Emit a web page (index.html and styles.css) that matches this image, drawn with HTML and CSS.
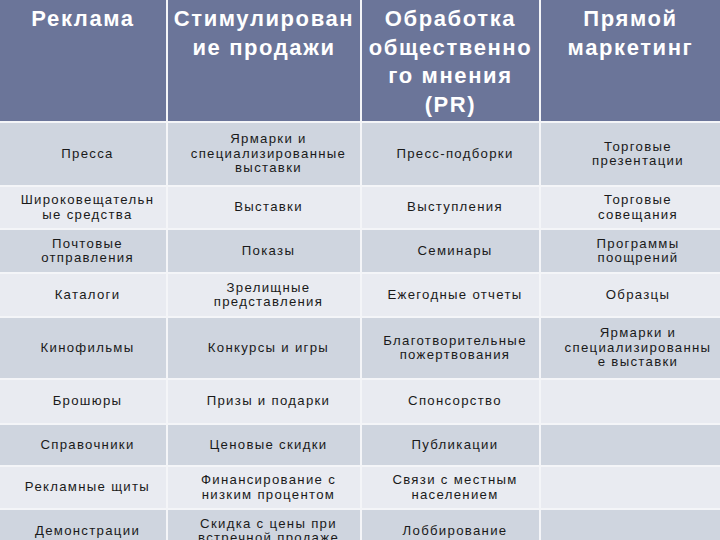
FILE: index.html
```html
<!DOCTYPE html>
<html lang="ru">
<head>
<meta charset="utf-8">
<link rel="stylesheet" href="styles.css">
</head>
<body>
<div class="table">
  <div class="cell head">Реклама</div>
  <div class="cell head">Стимулирован<br>ие продажи</div>
  <div class="cell head">Обработка<br>общественно<br>го мнения<br>(PR)</div>
  <div class="cell head">Прямой<br>маркетинг</div>

  <div class="cell dark">Пресса</div>
  <div class="cell dark">Ярмарки и<br>специализированные<br>выставки</div>
  <div class="cell dark">Пресс-подборки</div>
  <div class="cell dark last">Торговые<br>презентации</div>

  <div class="cell light">Широковещательн<br>ые средства</div>
  <div class="cell light">Выставки</div>
  <div class="cell light">Выступления</div>
  <div class="cell light last">Торговые<br>совещания</div>

  <div class="cell dark">Почтовые<br>отправления</div>
  <div class="cell dark">Показы</div>
  <div class="cell dark">Семинары</div>
  <div class="cell dark last">Программы<br>поощрений</div>

  <div class="cell light">Каталоги</div>
  <div class="cell light">Зрелищные<br>представления</div>
  <div class="cell light">Ежегодные отчеты</div>
  <div class="cell light last">Образцы</div>

  <div class="cell dark">Кинофильмы</div>
  <div class="cell dark">Конкурсы и игры</div>
  <div class="cell dark">Благотворительные<br>пожертвования</div>
  <div class="cell dark last">Ярмарки и<br>специализированны<br>е выставки</div>

  <div class="cell light">Брошюры</div>
  <div class="cell light">Призы и подарки</div>
  <div class="cell light">Спонсорство</div>
  <div class="cell light last"></div>

  <div class="cell dark">Справочники</div>
  <div class="cell dark">Ценовые скидки</div>
  <div class="cell dark">Публикации</div>
  <div class="cell dark last"></div>

  <div class="cell light">Рекламные щиты</div>
  <div class="cell light">Финансирование с<br>низким процентом</div>
  <div class="cell light">Связи с местным<br>населением</div>
  <div class="cell light last"></div>

  <div class="cell dark">Демонстрации</div>
  <div class="cell dark">Скидка с цены при<br>встречной продаже</div>
  <div class="cell dark">Лоббирование</div>
  <div class="cell dark last"></div>
</div>
</body>
</html>
```

FILE: styles.css
```css
html, body {
  margin: 0;
  padding: 0;
  background: #ffffff;
  overflow: hidden;
}

.table {
  display: grid;
  grid-template-columns: 166px 192px 177px 179px;
  grid-template-rows: 121px 62px 41px 42px 42px 60px 43px 40px 41px 42px;
  column-gap: 2px;
  row-gap: 2px;
  width: 720px;
  background: #f4f5f8;
}

.cell {
  display: flex;
  align-items: center;
  justify-content: center;
  text-align: center;
  font-family: "Liberation Sans", Arial, sans-serif;
  font-size: 13.2px;
  line-height: 14.5px;
  letter-spacing: 1.3px;
  color: #1a1a1a;
  white-space: nowrap;
  padding-left: 9px;
}

.cell.last {
  padding-left: 15px;
}

.head {
  align-items: flex-start;
  background: #6b7599;
  color: #ffffff;
  font-weight: bold;
  font-size: 22px;
  line-height: 28.5px;
  letter-spacing: 1.6px;
  padding-top: 5px;
  padding-left: 0;
}

.dark {
  background: #cfd5df;
}

.light {
  background: #e9ebf1;
}
```
